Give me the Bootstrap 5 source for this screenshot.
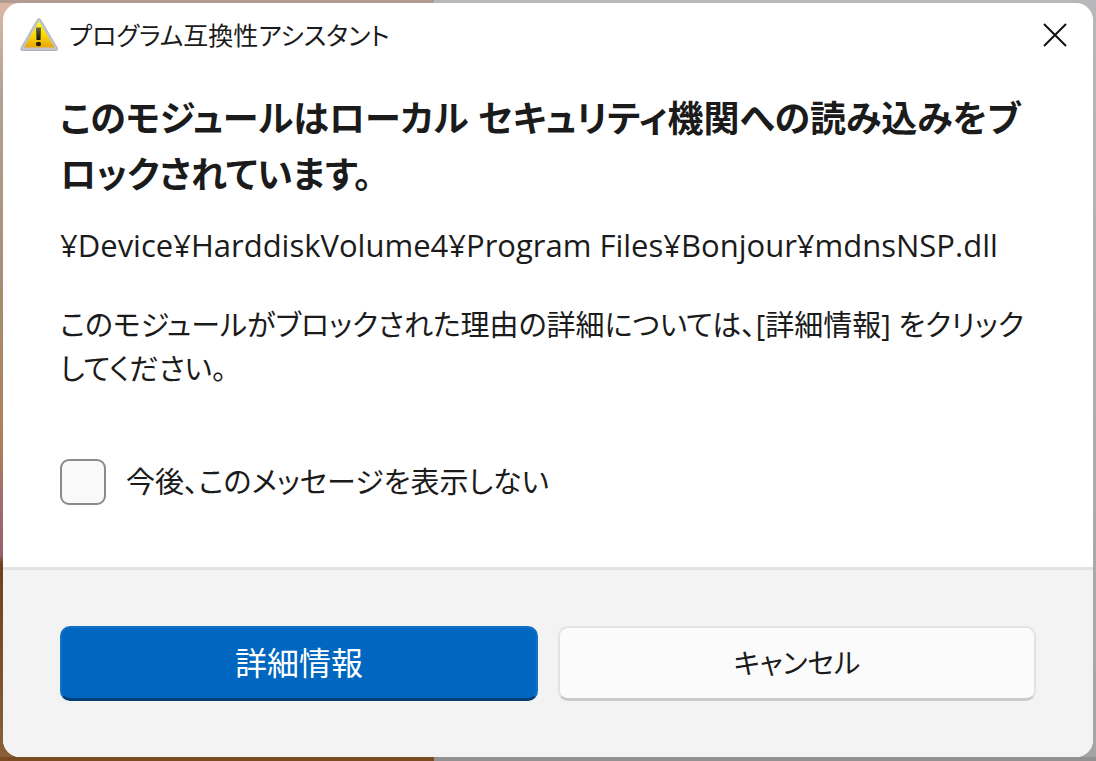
<!DOCTYPE html>
<html lang="ja">
<head>
<meta charset="utf-8">
<meta name="viewport" content="width=device-width, initial-scale=1">
<title>プログラム互換性アシスタント</title>
<link href="https://cdn.jsdelivr.net/npm/bootstrap@5.3.0/dist/css/bootstrap.min.css" rel="stylesheet">
<style>
  body {
    font-family: "Open Sans", "Noto Sans CJK JP", sans-serif;
    font-size: 29px;
    line-height: 44px;
    color: #1b1b1b;
    font-feature-settings: "palt";
    background: #b4b4b4;
  }
  /* wallpaper on the left, another window's grey on the right */
  .desktop {
    padding: 3px 3px 4px;
    background:
      linear-gradient(90deg, #b09c92 0 434px, transparent 434px) top / 100% 3px no-repeat,
      linear-gradient(90deg, #7a4a20 0 434px, #929090 434px) bottom / 100% 4px no-repeat,
      linear-gradient(#dcb8a4, #b3a294 12%, #a68c70 40%, #b08058 58%, #a06c70 66%, #98606c 73%, #6e421c 74%, #8a6038 100%) left / 434px 100% no-repeat,
      linear-gradient(#b8b8ba, #a4a4a4);
  }
  .dialog { border-radius: 17px; overflow: hidden; }
  .title-bar { padding: 13px 22px 0 16px; font-size: 25px; line-height: 38px; }
  .close-button { width: 32px; height: 32px; }
  .dialog-body { padding: 37px 57px 0; }
  .headline { font-size: 36px; line-height: 56px; font-weight: 700; margin-bottom: 20px; }
  .module-path { font-size: 31px; margin-bottom: 36px; }
  .reason { margin-bottom: 68px; }
  .form-check-input.hide-box {
    width: 46px; height: 46px; border: 2px solid #8b8b8b; border-radius: 9px; background-color: #f9f9f9;
  }
  .hide-label { margin-left: 20px; }
  .dialog-footer { padding: 56px 57px; border-top: 3px solid #e3e3e3; background: #f3f3f3; }
  .action-row { --bs-gutter-x: 20px; }
  .action { height: 75px; font-size: 32px; border-radius: 10px; border-width: 2px; font-feature-settings: inherit; }
  .action-main { background: #0067c0; color: #fff; border-color: #1172c5; border-bottom: 3px solid #003e73; }
  .action-cancel { font-size: 28px; background: #fbfbfb; color: #1b1b1b; border-color: #e3e3e3; border-bottom: 3px solid #cacaca; }
</style>
</head>
<body>
<div class="desktop min-vh-100 d-flex">
  <main class="dialog bg-white flex-fill d-flex flex-column" role="dialog" aria-labelledby="title">
    <header class="title-bar d-flex align-items-center">
      <svg class="me-2 flex-shrink-0" width="42" height="38" viewBox="0 0 42 38" aria-hidden="true">
        <defs>
          <linearGradient id="amber" x2="0" y2="1"><stop offset="0" stop-color="#ffff10"/><stop offset=".5" stop-color="#f8dc00"/><stop offset="1" stop-color="#eaa510"/></linearGradient>
          <linearGradient id="ink" x2="0" y2="1"><stop offset="0" stop-color="#666050"/><stop offset="1" stop-color="#171500"/></linearGradient>
        </defs>
        <path d="M18.500 3.500 L2 32 Q1 34.500 3.500 34.500 H37 Q39.500 34.500 38.300 32 L21.500 3.500 Q20 1.500 18.500 3.500Z" fill="#c4c5cb" stroke="#aeb0b8"/>
        <path d="M20 5.500 L5 31.500 H35.500Z" fill="url(#amber)"/>
        <path d="M17 11.500 H22 L21.500 24 H17.500Z" fill="url(#ink)"/><ellipse cx="19.500" cy="28" rx="2.600" ry="2.200" fill="#262100"/>
      </svg>
      <span id="title">プログラム互換性アシスタント</span>
      <button type="button" class="close-button btn p-0 border-0 ms-auto d-flex align-items-center justify-content-center" aria-label="閉じる">
        <svg width="26" height="26" viewBox="0 0 26 26" aria-hidden="true"><path d="M2 2 24 24M24 2 2 24" stroke="#111" stroke-width="2" fill="none"/></svg>
      </button>
    </header>
    <section class="dialog-body flex-grow-1">
      <h1 class="headline">このモジュールはローカル セキュリティ機関への読み込みをブ<br>ロックされています。</h1>
      <p class="module-path">¥Device¥HarddiskVolume4¥Program Files¥Bonjour¥mdnsNSP.dll</p>
      <p class="reason">このモジュールがブロックされた理由の詳細については、[詳細情報] をクリック<br>してください。</p>
      <div class="d-flex align-items-center">
        <input class="form-check-input hide-box m-0 flex-shrink-0" type="checkbox" id="hide">
        <label class="hide-label" for="hide">今後、このメッセージを表示しない</label>
      </div>
    </section>
    <footer class="dialog-footer">
      <div class="row action-row">
        <div class="col-6"><button type="button" class="btn action action-main w-100">詳細情報</button></div>
        <div class="col-6"><button type="button" class="btn action action-cancel w-100">キャンセル</button></div>
      </div>
    </footer>
  </main>
</div>
<script src="https://cdn.jsdelivr.net/npm/bootstrap@5.3.0/dist/js/bootstrap.bundle.min.js"></script>
</body>
</html>
